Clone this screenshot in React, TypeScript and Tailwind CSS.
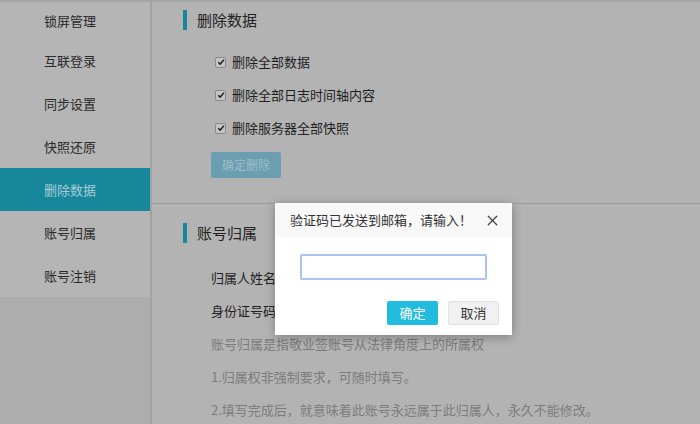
import { X } from "lucide-react";

const menu = ["锁屏管理", "互联登录", "同步设置", "快照还原", "删除数据", "账号归属", "账号注销"];

function Check({ label }: { label: string }) {
  return (
    <label className="flex h-[33px] items-center gap-[6px] text-[13px] text-[#1f1f1f]">
      <span className="flex h-[11px] w-[11px] items-center justify-center rounded-[2px] border border-[#8a8a8a] bg-[#c4c4c4]">
        <svg viewBox="0 0 10 10" className="h-[8px] w-[8px]">
          <path d="M1.5 5.2 L4 7.6 L8.6 2.2" fill="none" stroke="#222" strokeWidth="1.8" />
        </svg>
      </span>
      {label}
    </label>
  );
}

function Title({ text }: { text: string }) {
  return (
    <div className="flex items-center gap-[10px] pl-[31px]">
      <span className="h-[20px] w-[4px] bg-[#17879b]" />
      <span className="text-[15px] text-[#222]">{text}</span>
    </div>
  );
}

export default function App() {
  return (
    <div
      className="relative h-[424px] w-[700px] overflow-hidden border-t-2 border-[#a6a6a6] bg-[#b3b3b3]"
      style={{ fontFamily: '"Noto Sans CJK SC", "Noto Sans", sans-serif' }}
    >
      <div className="flex h-full">
        {/* 侧栏 */}
        <aside className="flex h-full w-[152px] flex-none flex-col border-r-2 border-[#a2a2a2] bg-[#adadad]">
          {menu.map((m, i) => (
            <div
              key={m}
              className={`flex items-center pl-[44px] text-[13px] ${
                i === 0 ? "h-[37px]" : "h-[43px]"
              } ${i === 4 ? "bg-[#17879c] text-[#a9ccd5]" : "bg-[#b5b5b5] text-[#2a2a2a]"}`}
            >
              {m}
            </div>
          ))}
        </aside>

        {/* 主内容 */}
        <main className="flex-1">
          <div className="h-[201px] pt-[7px]">
            <Title text="删除数据" />
            <div className="mt-[14px] pl-[63px]">
              <Check label="删除全部数据" />
              <Check label="删除全部日志时间轴内容" />
              <Check label="删除服务器全部快照" />
            </div>
            <button className="ml-[59px] mt-[7px] h-[26px] w-[70px] rounded-[2px] bg-[#6a9eb0] text-[12px] text-[#9cbfcb]">
              确定删除
            </button>
          </div>
          <div className="h-px bg-[#9c9c9c]" />
          <div className="pt-[18px]">
            <Title text="账号归属" />
            <div className="mt-[17px] pl-[59px] text-[13px]">
              <div className="flex h-[33px] items-center text-[#1f1f1f]">归属人姓名</div>
              <div className="flex h-[33px] items-center text-[#1f1f1f]">身份证号码</div>
              <div className="flex h-[33px] items-center text-[#7c7c7c]">账号归属是指敬业签账号从法律角度上的所属权</div>
              <div className="flex h-[33px] items-center text-[#7c7c7c]">1.归属权非强制要求，可随时填写。</div>
              <div className="flex h-[33px] items-center text-[#7c7c7c]">2.填写完成后，就意味着此账号永远属于此归属人，永久不能修改。</div>
            </div>
          </div>
        </main>
      </div>

      {/* 弹窗 */}
      <div className="absolute left-[275px] top-[201px] w-[237px] bg-white shadow-[0_2px_10px_rgba(0,0,0,0.3)]">
        <div className="flex h-[34px] items-center justify-between bg-[#f8f8f8] pl-[15px] pr-[11px]">
          <span className="text-[13px] text-[#333]">验证码已发送到邮箱，请输入！</span>
          <X size={17} strokeWidth={1.8} className="text-[#444]" />
        </div>
        <div className="px-[25px] pt-[17px]">
          <input className="h-[26px] w-[187px] rounded-[2px] border-2 border-[#a9c3f3] outline-none" />
        </div>
        <div className="flex justify-end gap-[10px] pb-[10px] pr-[13px] pt-[21px]">
          <button className="h-[24px] w-[51px] rounded-[2px] bg-[#22bcdf] text-[13px] text-white">确定</button>
          <button className="h-[24px] w-[51px] rounded-[2px] border border-[#e1e1e1] bg-[#f1f1f1] text-[13px] text-[#333]">
            取消
          </button>
        </div>
      </div>
    </div>
  );
}
